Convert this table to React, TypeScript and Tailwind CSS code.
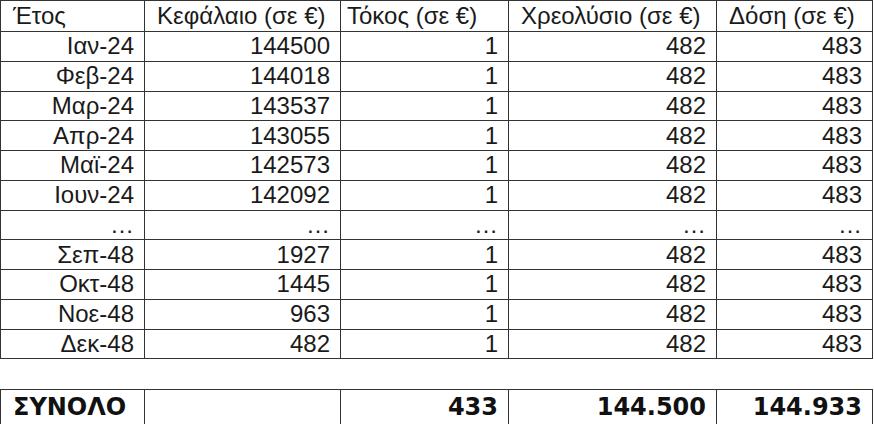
const rows = [
  ['Ιαν-24', '144500', '1', '482', '483'],
  ['Φεβ-24', '144018', '1', '482', '483'],
  ['Μαρ-24', '143537', '1', '482', '483'],
  ['Απρ-24', '143055', '1', '482', '483'],
  ['Μαϊ-24', '142573', '1', '482', '483'],
  ['Ιουν-24', '142092', '1', '482', '483'],
  ['…', '…', '…', '…', '…'],
  ['Σεπ-48', '1927', '1', '482', '483'],
  ['Οκτ-48', '1445', '1', '482', '483'],
  ['Νοε-48', '963', '1', '482', '483'],
  ['Δεκ-48', '482', '1', '482', '483'],
];

const headers = ['Έτος', 'Κεφάλαιο (σε €)', 'Τόκος (σε €)', 'Χρεολύσιο (σε €)', 'Δόση (σε €)'];

const Cols = () => (
  <colgroup>
    <col className="w-[144px]" />
    <col className="w-[196px]" />
    <col className="w-[168px]" />
    <col className="w-[208px]" />
    <col className="w-[156px]" />
  </colgroup>
);

const App = () => {
  return (
    <div className="w-[874px] h-[424px] bg-white overflow-hidden text-[24px] leading-none text-[#1a1a1a] font-['Liberation_Sans',Arial,sans-serif]">
      <table className="table-fixed border-collapse w-[873px]">
        <Cols />
        <thead>
          <tr className="h-[31px]">
            {headers.map((h, i) => (
              <th
                key={h}
                className={`border border-[#333] font-normal text-left align-middle ${i === 2 ? 'pl-[6px]' : 'pl-3'}`}
              >
                {h}
              </th>
            ))}
          </tr>
        </thead>
        <tbody>
          {rows.map((r, ri) => (
            <tr key={ri} className="h-[29.75px]">
              {r.map((c, ci) => (
                <td key={ci} className="border border-[#333] text-right pr-[10px] align-middle">
                  {c}
                </td>
              ))}
            </tr>
          ))}
        </tbody>
      </table>

      {/* total row: heavier, wider face */}
      <table className="table-fixed border-collapse w-[873px] mt-[30px] font-['DejaVu_Sans',sans-serif] font-bold text-[#111]">
        <Cols />
        <tbody>
          <tr className="h-[35px]">
            <td className="border border-[#333] text-left pl-3">ΣΥΝΟΛΟ</td>
            <td className="border border-[#333]"></td>
            <td className="border border-[#333] text-right pr-[10px]">433</td>
            <td className="border border-[#333] text-right pr-[10px]">144.500</td>
            <td className="border border-[#333] text-right pr-[10px]">144.933</td>
          </tr>
        </tbody>
      </table>
    </div>
  );
};

export default App;
